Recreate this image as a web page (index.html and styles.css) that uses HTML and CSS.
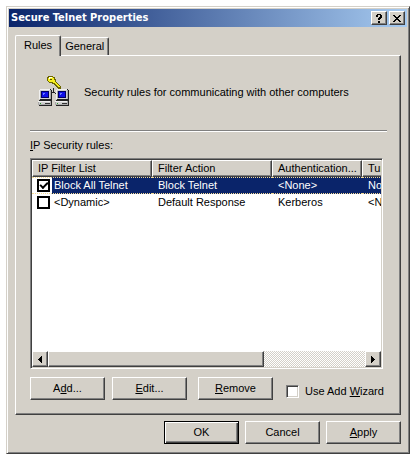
FILE: index.html
```html
<!DOCTYPE html>
<html lang="en">
<head>
<meta charset="UTF-8">
<title>Secure Telnet Properties</title>
<link rel="stylesheet" href="styles.css">
</head>
<body>
	<form class="window" onsubmit="return false">
		<header class="titlebar">
			<h1>Secure Telnet Properties</h1>
			<button type="button" class="caption" aria-label="Help">
				<svg width="8" height="9" viewBox="0 0 8 9"><path d="M1 1h1v-1h4v1h1v3h-1v1h-1v1h-2v-2h1v-1h1v-2h-2v2h-2zM3 7h2v2h-2z"/></svg>
			</button>
			<button type="button" class="caption" aria-label="Close">
				<svg width="8" height="7" viewBox="0 0 8 7"><path d="M0 0h2v1h1v1h2v-1h1v-1h2v1h-1v1h-1v1h-1v1h1v1h1v1h1v1h-2v-1h-1v-1h-2v1h-1v1h-2v-1h1v-1h1v-1h1v-1h-1v-1h-1v-1h-1z"/></svg>
			</button>
		</header>

		<div class="tabs" role="tablist">
			<button type="button" class="tab active" role="tab" aria-selected="true">Rules</button>
			<button type="button" class="tab" role="tab" aria-selected="false">General</button>
		</div>

		<section class="panel">
			<div class="intro">
				<svg class="icon" width="32" height="32" viewBox="0 0 32 32" shape-rendering="crispEdges">
					<!-- key -->
					<path fill="#6b6500" d="M10 0h5v1h2v2h1v3h1v1h1v1h1v1h1v1h1v3h-3v-1h-1v-1h-1v-1h-1v-1h-1v-1h-2v-1h-3v-1h-1v-1h-1v-4h1z"/>
					<path fill="#f6ee20" d="M10 1h5v1h1v2h1v2h1v1h1v1h1v1h1v1h1v1h-2v-1h-1v-1h-1v-1h-1v-1h-2v-1h-4v-1h-1v-3h1z"/>
					<path fill="#fff" d="M11 1h3v1h-2v1h-1z"/>
					<path fill="#555000" d="M12 3h2v1h-2z"/>
					<!-- wires -->
					<path fill="#222" d="M15 12h1v4h-1zM14 16h3v1h-3zM13 17h1v1h-1zM17 17h1v1h-1z"/>
					<!-- computers -->
					<g id="pc">
						<path fill="#222" d="M2 13h11v1h1v10h-12zM1 24h13v6h-13z"/>
						<path fill="#aaa" d="M1 14h12v9h-12zM0 25h13v4h-13z"/>
						<path fill="#f0f0f0" d="M2 13h10v1h-10zM1 14h1v9h-1zM0 25h12v1h-12z"/>
						<path fill="#d0d0d0" d="M2 14h10v1h-10zM11 15h1v8h-1zM2 22h10v1h-10zM1 26h11v2h-11z"/>
						<path fill="#000060" d="M3 15h8v7h-8z"/>
						<path fill="#1010e8" d="M4 16h6v5h-6z"/>
						<path fill="#6a7cff" d="M5 17h2v1h-1v1h-1z"/>
						<path fill="#333" d="M7 27h5v1h-5z"/>
						<path fill="#299b29" d="M2 27h1v1h-1z"/>
					</g>
					<use href="#pc" x="17"/>
				</svg>
				<p>Security rules for communicating with other computers</p>
			</div>
			<hr>
			<h2><u>I</u>P Security rules:</h2>

			<div class="list">
				<div class="rows">
					<table>
						<colgroup>
							<col class="c-filter"><col class="c-action"><col class="c-auth"><col class="c-tunnel">
						</colgroup>
						<thead>
							<tr><th>IP Filter List</th><th>Filter Action</th><th>Authentication...</th><th>Tunnel</th></tr>
						</thead>
						<tbody>
							<tr class="selected">
								<td><label><input type="checkbox" checked><span>Block All Telnet</span></label></td>
								<td>Block Telnet</td><td>&lt;None&gt;</td><td>None</td>
							</tr>
							<tr>
								<td><label><input type="checkbox"><span>&lt;Dynamic&gt;</span></label></td>
								<td>Default Response</td><td>Kerberos</td><td>&lt;None&gt;</td>
							</tr>
						</tbody>
					</table>
				</div>
				<div class="scrollbar">
					<button type="button" class="arrow" aria-label="Scroll left"><svg width="4" height="7" viewBox="0 0 4 7"><path d="M4 0v7h-1v-1h-1v-1h-1v-1h-1v-1h1v-1h1v-1h1v-1z"/></svg></button>
					<div class="track"><div class="thumb"></div></div>
					<button type="button" class="arrow" aria-label="Scroll right"><svg width="4" height="7" viewBox="0 0 4 7"><path d="M0 0v7h1v-1h1v-1h1v-1h1v-1h-1v-1h-1v-1h-1v-1z"/></svg></button>
				</div>
			</div>

			<div class="actions">
				<button type="button" class="btn">A<u>d</u>d...</button>
				<button type="button" class="btn"><u>E</u>dit...</button>
				<button type="button" class="btn remove"><u>R</u>emove</button>
				<label class="wizard"><input type="checkbox"><span>Use Add <u>W</u>izard</span></label>
			</div>
		</section>

		<footer>
			<button type="submit" class="btn default">OK</button>
			<button type="button" class="btn">Cancel</button>
			<button type="button" class="btn"><u>A</u>pply</button>
		</footer>
	</form>
</body>
</html>
```
FILE: styles.css
```css
*{box-sizing:border-box; margin:0; padding:0;}
body{
	padding:6px 4px 6px 6px;
	background:#fff;
	color:#000;
	font:11px/13px "Liberation Sans", Arial, sans-serif;
}
button, input{font:inherit; color:inherit; border-radius:0;}
u{text-underline-offset:1px;}

.window{
	padding:2px;
	background:#d4d0c8;
	border:1px solid;
	border-color:#d4d0c8 #404040 #404040 #d4d0c8;
	box-shadow:inset 1px 1px #fff, inset -1px -1px #808080;
}

/* title bar */
.titlebar{
	display:flex;
	align-items:center;
	gap:2px;
	height:18px;
	padding:0 2px;
	background:linear-gradient(90deg, #0a246a, #a6caf0);
}
.titlebar h1{
	flex:1;
	color:#fff;
	font:bold 11px/18px "DejaVu Sans Condensed", "Noto Sans", sans-serif;
}
.caption, .arrow, .thumb, .btn, th{
	background:#d4d0c8;
	border:1px solid;
	border-color:#fff #404040 #404040 #fff;
	box-shadow:inset -1px -1px #808080;
}
.caption{
	display:flex;
	align-items:center;
	justify-content:center;
	width:16px;
	height:14px;
}

/* tabs */
.tabs{
	display:flex;
	align-items:flex-end;
	padding:8px 6px 0;
}
.tab{
	height:18px;
	padding:0 4px;
	background:#d4d0c8;
	border:1px solid;
	border-color:#fff #404040 #d4d0c8 #fff;
	border-bottom:0;
	border-left:0;
	border-radius:2px 2px 0 0;
	box-shadow:inset -1px 0 #808080;
}
.tab.active{
	position:relative;
	height:21px;
	padding:0 8px 2px;
	margin-bottom:-1px;
	border-left:1px solid #fff;
}
.panel{
	margin:0 6px;
	padding:20px 13px 14px 14px;
	border:1px solid;
	border-color:#fff #404040 #404040 #fff;
	box-shadow:inset -1px -1px #808080;
}
.intro{
	display:flex;
	align-items:center;
	gap:14px;
	padding:0 8px;
}
hr{
	margin:22px 0 7px;
	border:0;
	border-top:1px solid #808080;
	border-bottom:1px solid #fff;
}
h2{font-size:11px; font-weight:normal;}

/* rule list */
.list{
	margin:6px 4px 0 0;
	padding:1px;
	background:#fff;
	border:1px solid;
	border-color:#808080 #fff #fff #808080;
	box-shadow:inset 1px 1px #404040, inset -1px -1px #d4d0c8;
}
.rows{height:191px; overflow:hidden;}
table{
	width:420px;
	table-layout:fixed;
	border-collapse:separate;
	border-spacing:0;
}
.c-filter, .c-action{width:120px;}
.c-auth, .c-tunnel{width:90px;}
th, td{
	height:17px;
	padding:0 6px;
	text-align:left;
	font-weight:normal;
	white-space:nowrap;
}
th{padding:0 5px;}
td label{display:flex; align-items:center; margin-left:-1px;}
td span{padding:0 2px;}
.selected td{
	background:#0a246a;
	color:#fff;
	border-top:1px dotted #f5db95;
	border-bottom:1px dotted #f5db95;
}
.selected td:first-child{
	background:linear-gradient(90deg, #fff 20px, #0a246a 20px);
}
input[type=checkbox]{
	appearance:none;
	flex:none;
	width:13px;
	height:13px;
	background:#fff;
	border:2px solid #000;
}
td input[type=checkbox]{margin-right:2px;}
input[type=checkbox]:checked::before{
	content:"";
	display:block;
	width:6px;
	height:3px;
	margin:1px;
	border:solid #000;
	border-width:0 0 2px 2px;
	transform:rotate(-45deg);
}

.scrollbar{display:flex; height:16px;}
.arrow{
	display:flex;
	align-items:center;
	justify-content:center;
	width:16px;
	height:16px;
}
.track{
	flex:1;
	background:repeating-conic-gradient(#fff 0 25%, #d4d0c8 0 50%) 0 0/2px 2px;
}
.thumb{width:68%; height:16px;}

/* buttons */
.btn{width:75px; height:23px;}
.btn.default{
	border-color:#000;
	box-shadow:inset 1px 1px #fff, inset -1px -1px #404040, inset -2px -2px #808080;
}
.actions{
	display:flex;
	align-items:flex-start;
	gap:7px;
	margin-top:8px;
}
.remove{margin-left:4px;}
.wizard{
	display:flex;
	align-items:center;
	gap:6px;
	margin:8px 0 0 6px;
	white-space:nowrap;
}
.wizard input[type=checkbox]{
	border:1px solid;
	border-color:#808080 #fff #fff #808080;
	box-shadow:inset 1px 1px #404040, inset -1px -1px #d4d0c8;
}
footer{
	display:flex;
	justify-content:flex-end;
	gap:6px;
	padding:6px 6px 7px;
}
```
